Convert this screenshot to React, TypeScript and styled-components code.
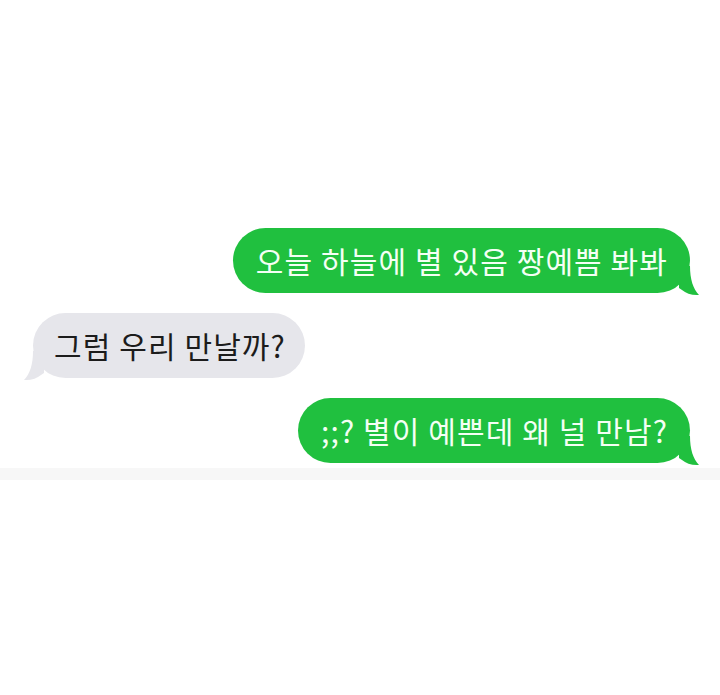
import React from "react";
import styled, { createGlobalStyle } from "styled-components";

const Global = createGlobalStyle`
  html, body { margin: 0; padding: 0; background: #ffffff; }
  body { font-family: "Noto Sans CJK KR", "Noto Sans", sans-serif; }
`;

const Page = styled.div`
  width: 720px;
  height: 695px;
  background: #ffffff;
  overflow: hidden;
`;

const Thread = styled.div`
  display: flex;
  flex-direction: column;
  gap: 20px;
  padding: 228px 30px 5px 33px;
  background: #ffffff;
`;

const Band = styled.div`
  height: 12px;
  background: #f7f7f7;
`;

const Row = styled.div<{ $out: boolean }>`
  display: flex;
  justify-content: ${(p) => (p.$out ? "flex-end" : "flex-start")};
`;

const Bubble = styled.div<{ $out: boolean }>`
  position: relative;
  box-sizing: border-box;
  height: 65px;
  display: flex;
  align-items: center;
  padding: 0 ${(p) => (p.$out ? "22px" : "19px")} 2px ${(p) => (p.$out ? "23px" : "21px")};
  border-radius: 33px;
  background: ${(p) => (p.$out ? "#20c03f" : "#e6e6eb")};
  color: ${(p) => (p.$out ? "#f4fff4" : "#1c1c1c")};
  font-size: 30px;
  letter-spacing: 1.1px;
  line-height: 1;
  white-space: nowrap;
`;

const Tail = styled.svg<{ $out: boolean }>`
  position: absolute;
  bottom: -3px;
  width: 22px;
  height: 30px;
  ${(p) => (p.$out ? "right: -11px;" : "left: -11px; transform: scaleX(-1);")}
`;

type Msg = { text: string; out: boolean };

const messages: Msg[] = [
  { text: "오늘 하늘에 별 있음 짱예쁨 봐봐", out: true },
  { text: "그럼 우리 만날까?", out: false },
  { text: ";;? 별이 예쁜데 왜 널 만남?", out: true },
];

export default function App() {
  return (
    <Page>
      <Global />
      <Thread>
        {messages.map((m, i) => (
          <Row key={i} $out={m.out}>
            <Bubble $out={m.out}>
              {m.text}
              <Tail $out={m.out} viewBox="0 0 22 30">
                <path
                  d="M0 0 L11 0 C11 13 14 23 20 29 C13 29.5 7 27.5 3 24 L0 22 Z"
                  fill={m.out ? "#20c03f" : "#e6e6eb"}
                />
              </Tail>
            </Bubble>
          </Row>
        ))}
      </Thread>
      <Band />
    </Page>
  );
}
